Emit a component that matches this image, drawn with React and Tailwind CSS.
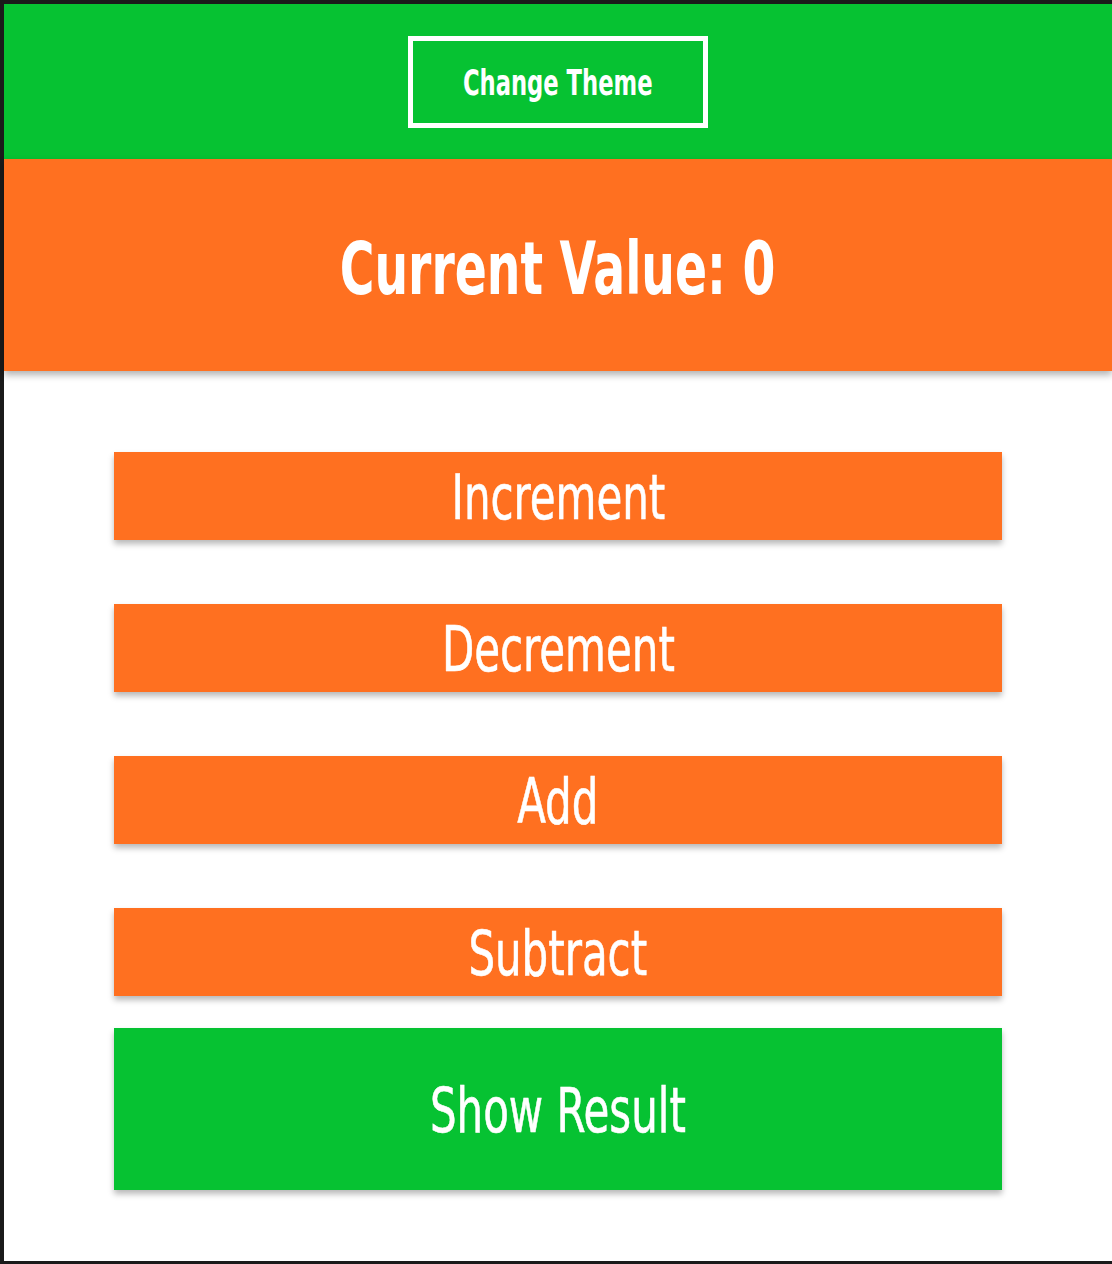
export default function App() {
  const font = { fontFamily: '"DejaVu Sans Condensed", "Liberation Sans", sans-serif' };
  const btn = "h-[88px] w-[888px] bg-[#ff7020] text-white text-[63px] leading-none flex items-center justify-center shadow-[0_4px_6px_rgba(0,0,0,0.28)]";
  const txt = "inline-block scale-x-[0.74] whitespace-nowrap pt-[3px] [-webkit-text-stroke:0.6px_white]";
  return (
    <div className="h-[1264px] w-[1112px] box-border border-l-4 border-t-4 border-b-[3px] border-[#1a1a1a] bg-white flex flex-col" style={font}>
      <div className="h-[155px] bg-[#06c232] flex justify-center pt-[32px] shrink-0">
        <div className="w-[300px] h-[92px] border-[5px] border-white flex items-center justify-center text-white font-bold text-[35px] leading-none">
          <span className="inline-block scale-x-[0.72] whitespace-nowrap pt-[3px]">Change Theme</span>
        </div>
      </div>
      <div className="h-[212px] bg-[#ff7020] flex items-center justify-center shadow-[0_4px_7px_rgba(0,0,0,0.3)] shrink-0 relative z-10">
        <span className="inline-block text-white font-bold text-[73px] leading-none scale-x-[0.72] whitespace-nowrap pt-[7px]">Current Value: 0</span>
      </div>
      <div className="flex flex-col items-center pt-[81px]">
        <div className="flex flex-col gap-[64px]">
          <div className={btn}><span className={txt}>Increment</span></div>
          <div className={btn}><span className={txt}>Decrement</span></div>
          <div className={btn}><span className={txt}>Add</span></div>
          <div className={btn}><span className={txt}>Subtract</span></div>
        </div>
        <div className="mt-[32px] h-[162px] w-[888px] bg-[#06c232] text-white text-[63px] leading-none flex items-center justify-center shadow-[0_4px_6px_rgba(0,0,0,0.28)]">
          <span className={txt}>Show Result</span>
        </div>
      </div>
    </div>
  );
}
